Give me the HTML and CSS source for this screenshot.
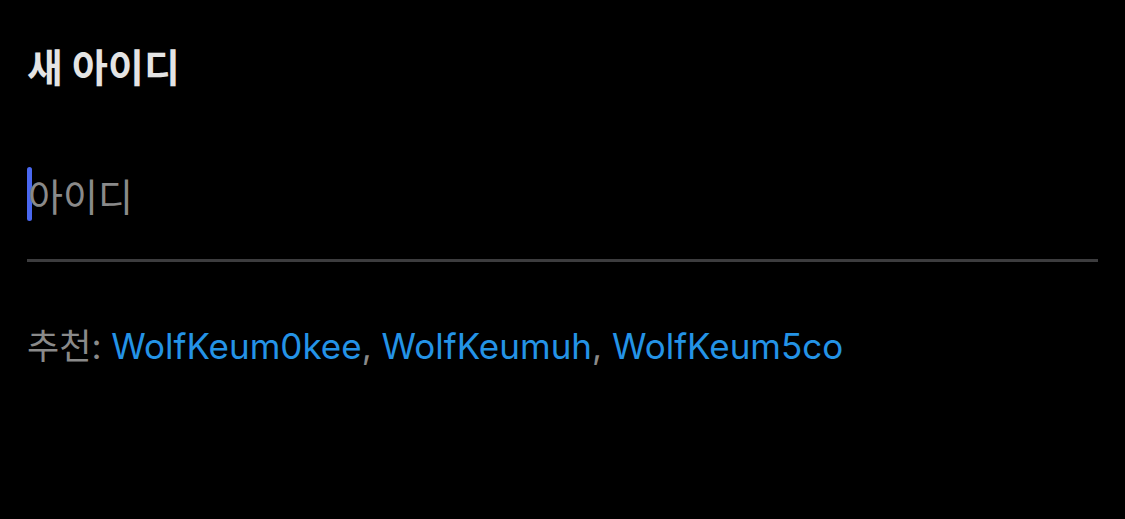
FILE: index.html
```html
<!DOCTYPE html>
<html lang="ko">

<head>
    <meta charset="UTF-8">
    <meta name="viewport" content="width=device-width, initial-scale=1.0">
    <title>새 아이디</title>
    <link rel="stylesheet" href="styles.css">
</head>

<body>
    <div class="page">
        <h1 class="title">새 아이디</h1>

        <div class="field">
            <span class="caret"></span>
            <span class="placeholder">아이디</span>
        </div>

        <p class="suggest">
            <span class="label">추천: </span><a class="name">WolfKeum0kee</a><span class="sep">, </span><a class="name">WolfKeumuh</a><span class="sep">, </span><a class="name">WolfKeum5co</a>
        </p>
    </div>
</body>

</html>
```

FILE: styles.css
```css
body {
    margin: 0;
    padding: 0;
    background-color: #000;
    font-family: Inter, "Noto Sans CJK KR", sans-serif;
}

.page {
    padding: 40px 27px 0 27px;
}

.title {
    margin: 0;
    font-size: 39px;
    font-weight: bold;
    color: #e4e4e4;
    line-height: 56px;
}

.field {
    display: flex;
    align-items: center;
    margin-top: 70px;
    height: 56px;
    padding-bottom: 37px;
    border-bottom: 3px solid #3c3c3e;
}

.caret {
    width: 5px;
    height: 54px;
    border-radius: 3px;
    background-color: #4a68f0;
}

.placeholder {
    margin-left: -4px;
    font-size: 38px;
    color: #8a8a8a;
}

.suggest {
    margin: 64px 0 0 0;
    font-size: 35px;
    line-height: 40px;
    color: #8a8a8a;
}

.name {
    color: #2493e6;
}
```
